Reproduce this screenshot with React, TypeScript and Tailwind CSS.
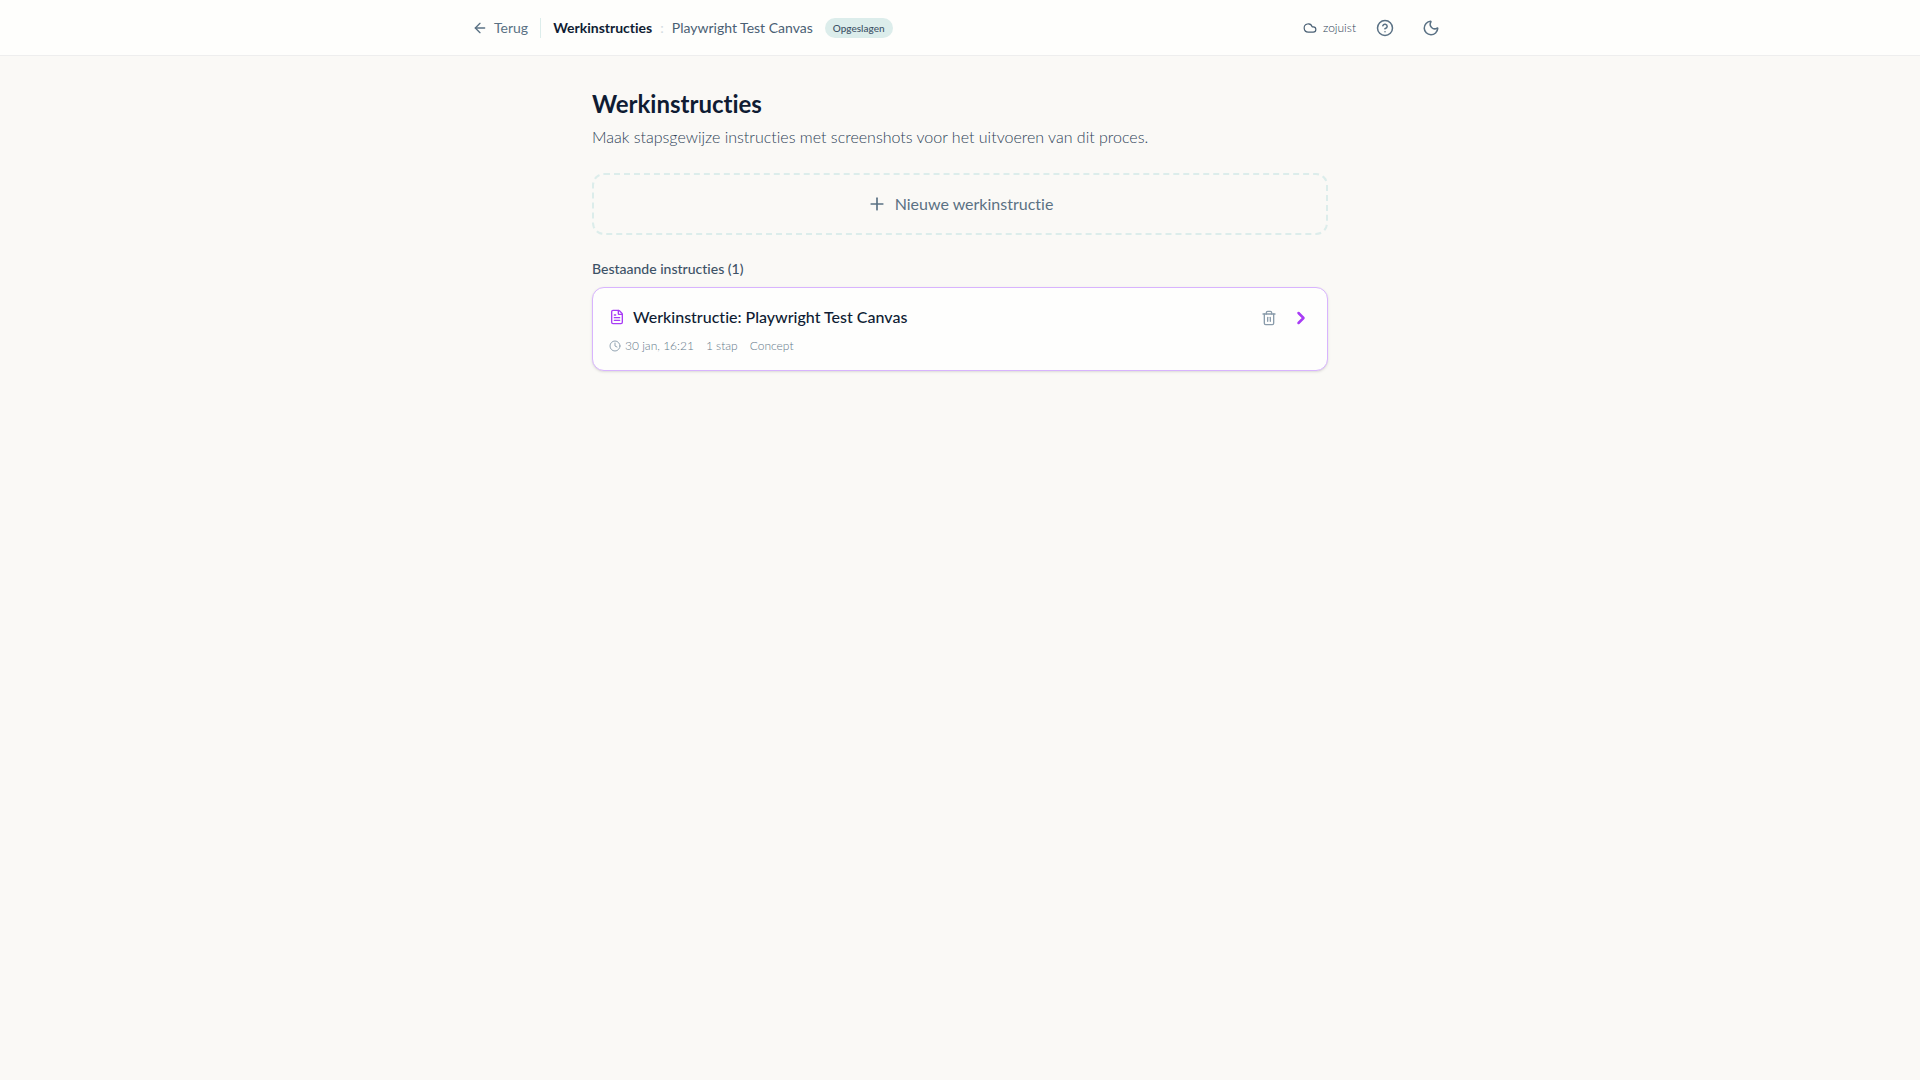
import { ArrowLeft, ChevronRight, CircleHelp, Clock, Cloud, FileText, Moon, Plus, Trash2 } from "lucide-react";

type Instruction = {
  id: string;
  title: string;
  updatedAt: string;
  steps: string;
  status: string;
};

const INSTRUCTIONS: Instruction[] = [
  {
    id: "1",
    title: "Werkinstructie: Playwright Test Canvas",
    updatedAt: "30 jan, 16:21",
    steps: "1 stap",
    status: "Concept",
  },
];

function Header() {
  return (
    <header className="border-b border-[#eeeeee] bg-[#fefefc]">
      <div className="mx-auto flex h-[55px] max-w-5xl items-center justify-between px-6">
        <div className="flex items-center">
          <a href="#" className="flex items-center gap-1.5 text-sm text-[#5a7184]">
            <ArrowLeft size={16} />
            Terug
          </a>
          <div className="mx-3 h-5 w-px bg-[#dcedeb]" />
          <span className="text-sm font-bold text-[#0f1c33]">Werkinstructies</span>
          <span className="mx-2 text-sm text-[#d3dbe0]">:</span>
          <span className="text-sm text-[#4a6074]">Playwright Test Canvas</span>
          <span className="ml-3 rounded-full bg-[#dcedeb] px-2 py-0.5 text-[10px] leading-4 font-medium text-[#3d5266]">
            Opgeslagen
          </span>
        </div>
        <div className="flex items-center text-[#5a7184]">
          <span className="flex items-center gap-1.5 text-xs font-light text-[#2f4357]">
            <Cloud size={14} className="text-[#4a6074]" />
            zojuist
          </span>
          <button type="button" aria-label="Help" className="ml-3 p-2">
            <CircleHelp size={18} />
          </button>
          <button type="button" aria-label="Donker thema" className="ml-3 p-2">
            <Moon size={18} />
          </button>
        </div>
      </div>
    </header>
  );
}

function InstructionCard({ instruction }: { instruction: Instruction }) {
  return (
    <article className="flex items-start justify-between rounded-xl border border-[#d8b4fe] bg-[#fefefd] p-4 shadow-sm">
      <div>
        <h3 className="flex items-center gap-2 text-base leading-[26px] font-medium text-[#0f1c33]">
          <FileText size={16} className="text-[#a83cf5]" />
          {instruction.title}
        </h3>
        <div className="mt-2 flex items-center gap-3 text-xs font-light text-[#64798a]">
          <span className="flex items-center gap-1">
            <Clock size={12} className="text-[#94a5b3]" />
            {instruction.updatedAt}
          </span>
          <span>{instruction.steps}</span>
          <span>{instruction.status}</span>
        </div>
      </div>
      <div className="flex items-center gap-2">
        <button type="button" aria-label="Verwijderen" className="p-1.5 text-[#8a9cab]">
          <Trash2 size={16} />
        </button>
        <button type="button" aria-label="Openen" className="text-[#a83cf5]">
          <ChevronRight size={20} strokeWidth={3} />
        </button>
      </div>
    </article>
  );
}

export default function App() {
  return (
    <div className="min-h-screen bg-[#faf9f6] font-['Lato',sans-serif] [font-variant-ligatures:none]">
      <Header />
      <main className="mx-auto max-w-3xl px-4 py-8">
        <h1 className="text-2xl font-bold text-[#0f1c33]">Werkinstructies</h1>
        <p className="mt-1 text-base leading-[25px] font-light text-[#2f4357]">
          Maak stapsgewijze instructies met screenshots voor het uitvoeren van dit proces.
        </p>
        <button
          type="button"
          className="mt-6 flex w-full items-center justify-center gap-2 rounded-xl border-2 border-dashed border-[#dcedeb] p-4 text-base leading-[26px] text-[#5a7184]"
        >
          <Plus size={20} />
          Nieuwe werkinstructie
        </button>
        <h2 className="mt-6 mb-2 text-sm font-medium text-[#3d5266]">Bestaande instructies ({INSTRUCTIONS.length})</h2>
        {INSTRUCTIONS.map((instruction) => (
          <InstructionCard key={instruction.id} instruction={instruction} />
        ))}
      </main>
    </div>
  );
}
